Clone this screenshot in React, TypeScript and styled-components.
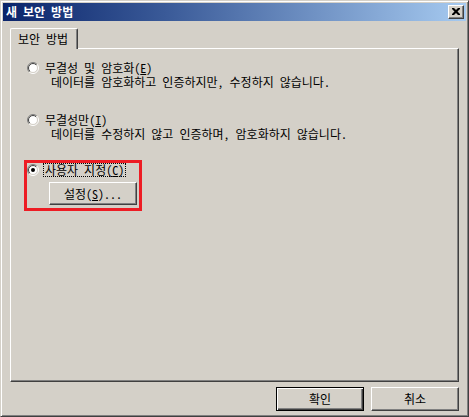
import React from 'react'
import styled, { createGlobalStyle } from 'styled-components'

const GlobalStyle = createGlobalStyle`
  html, body {
    margin: 0;
    padding: 0;
    background: #d4d0c8;
  }
`

const FONT = `"Noto Sans Mono CJK KR", "Noto Sans CJK KR", sans-serif`

interface OptionItem {
  label: string
  mnemonic: string
  description: string
}

const options: OptionItem[] = [
  { label: '무결성 및 암호화(', mnemonic: 'E', description: '데이터를 암호화하고 인증하지만, 수정하지 않습니다.' },
  { label: '무결성만(', mnemonic: 'I', description: '데이터를 수정하지 않고 인증하며, 암호화하지 않습니다.' }
]

const RadioIcon: React.FC<{ checked?: boolean }> = ({ checked }) => (
  <RadioSvg width='12' height='12' viewBox='0 0 12 12'>
    <defs>
      <linearGradient id='radioOuter' x1='0' y1='0' x2='1' y2='1'>
        <stop offset='0.5' stopColor='#808080' />
        <stop offset='0.5' stopColor='#ffffff' />
      </linearGradient>
      <linearGradient id='radioInner' x1='0' y1='0' x2='1' y2='1'>
        <stop offset='0.5' stopColor='#404040' />
        <stop offset='0.5' stopColor='#d4d0c8' />
      </linearGradient>
    </defs>
    <circle cx='6' cy='6' r='5.5' fill='none' stroke='url(#radioOuter)' strokeWidth='1' />
    <circle cx='6' cy='6' r='4.5' fill='#ffffff' stroke='url(#radioInner)' strokeWidth='1' />
    {checked && <circle cx='6' cy='6' r='2' fill='#000000' />}
  </RadioSvg>
)

const App: React.FC = () => {
  return (
    <>
      <GlobalStyle />
      <Window>
        <TitleBar>
          <TitleText>새 보안 방법</TitleText>
          <CloseButton>
            <svg width='8' height='7' viewBox='0 0 8 7'>
              <path d='M0 0h2l2 2 2-2h2v1L5.5 3.5 8 6v1H6L4 5 2 7H0V6l2.5-2.5L0 1z' fill='#000' />
            </svg>
          </CloseButton>
        </TitleBar>

        <Body>
          <TabStrip>
            <Tab>보안 방법</Tab>
          </TabStrip>

          <Panel>
            {options.map((o, i) => (
              <OptionGroup key={o.mnemonic} $gap={i === 0 ? 0 : 24}>
                <RadioRow>
                  <RadioIcon />
                  <Label>
                    {o.label}
                    <u>{o.mnemonic}</u>)
                  </Label>
                </RadioRow>
                <Description>{o.description}</Description>
              </OptionGroup>
            ))}

            <Highlight>
              <RadioRow>
                <RadioIcon checked />
                <Label $focused>
                  사용자 지정(<u>C</u>)
                </Label>
              </RadioRow>
              <SettingsButton>
                설정(<u>S</u>)...
              </SettingsButton>
            </Highlight>
          </Panel>

          <Footer>
            <PushButton $default>확인</PushButton>
            <PushButton>취소</PushButton>
          </Footer>
        </Body>
      </Window>
    </>
  )
}

const Window = styled.div`
  width: 469px;
  height: 417px;
  box-sizing: border-box;
  border: 1px solid;
  border-color: #d4d0c8 #404040 #404040 #d4d0c8;
  box-shadow: inset 1px 1px #ffffff, inset -1px -1px #808080;
  padding: 2px;
  background: #d4d0c8;
  display: flex;
  flex-direction: column;
  font-family: ${FONT};
  font-size: 12px;
  color: #000;
`

const TitleBar = styled.div`
  height: 18px;
  flex-shrink: 0;
  display: flex;
  align-items: center;
  justify-content: space-between;
  padding: 0 2px 0 3px;
  background: linear-gradient(90deg, #0a246a 0%, #3a5a98 35%, #a6caf0 100%);
`

const TitleText = styled.span`
  color: #ffffff;
  font-weight: bold;
  font-size: 12px;
  line-height: 18px;
  white-space: pre;
`

const CloseButton = styled.div`
  width: 16px;
  height: 14px;
  box-sizing: border-box;
  background: #d4d0c8;
  border: 1px solid;
  border-color: #ffffff #404040 #404040 #ffffff;
  box-shadow: inset -1px -1px #808080;
  display: flex;
  align-items: center;
  justify-content: center;
  padding: 0 1px 1px 0;
`

const Body = styled.div`
  flex: 1;
  display: flex;
  flex-direction: column;
  padding: 7px 7px 3px 7px;
`

const TabStrip = styled.div`
  height: 20px;
  display: flex;
  align-items: flex-end;
  flex-shrink: 0;
`

const Tab = styled.div`
  position: relative;
  z-index: 1;
  height: 21px;
  width: 68px;
  box-sizing: border-box;
  margin-bottom: -1px;
  padding: 3px 0 0 7px;
  background: #d4d0c8;
  border-top: 1px solid #ffffff;
  border-left: 1px solid #ffffff;
  border-right: 1px solid #404040;
  border-top-left-radius: 2px;
  border-top-right-radius: 2px;
  box-shadow: inset -1px 0 #808080;
  line-height: 14px;
  white-space: pre;
`

const Panel = styled.div`
  flex: 1;
  box-sizing: border-box;
  border: 1px solid;
  border-color: #ffffff #404040 #404040 #ffffff;
  box-shadow: inset -1px -1px #808080;
  padding: 12px 0 0 16px;
  display: flex;
  flex-direction: column;
  align-items: flex-start;
`

const OptionGroup = styled.div<{ $gap: number }>`
  margin-top: ${(p) => p.$gap}px;
  display: flex;
  flex-direction: column;
`

const RadioRow = styled.div`
  display: flex;
  align-items: center;
  height: 14px;
`

const RadioSvg = styled.svg`
  flex-shrink: 0;
  margin-right: 4px;
`

const Label = styled.span<{ $focused?: boolean }>`
  line-height: 12px;
  padding: 0 1px;
  border: 1px dotted ${(p) => (p.$focused ? '#000' : 'transparent')};
  white-space: pre;
`

const Description = styled.div`
  margin-left: 24px;
  line-height: 14px;
  white-space: pre;
`

const Highlight = styled.div`
  margin: 19px 0 0 -3px;
  border: 3px solid #ed1c24;
  padding: 0 2px 3px 0;
  display: flex;
  flex-direction: column;
  align-items: flex-start;
`

const ButtonBase = styled.div`
  box-sizing: border-box;
  background: #d4d0c8;
  border: 1px solid;
  border-color: #ffffff #404040 #404040 #ffffff;
  box-shadow: inset -1px -1px #808080;
  display: flex;
  align-items: center;
  justify-content: center;
  white-space: pre;
  line-height: 14px;
`

const SettingsButton = styled(ButtonBase)`
  margin: 5px 0 0 22px;
  width: 88px;
  height: 23px;
`

const PushButton = styled(ButtonBase)<{ $default?: boolean }>`
  width: 88px;
  height: 24px;
  ${(p) =>
    p.$default &&
    `
    border-color: #000;
    box-shadow: inset 1px 1px #ffffff, inset -1px -1px #404040, inset -2px -2px #808080;
  `}
`

const Footer = styled.div`
  display: flex;
  justify-content: flex-end;
  gap: 7px;
  margin-top: 5px;
  flex-shrink: 0;
`

export default App
